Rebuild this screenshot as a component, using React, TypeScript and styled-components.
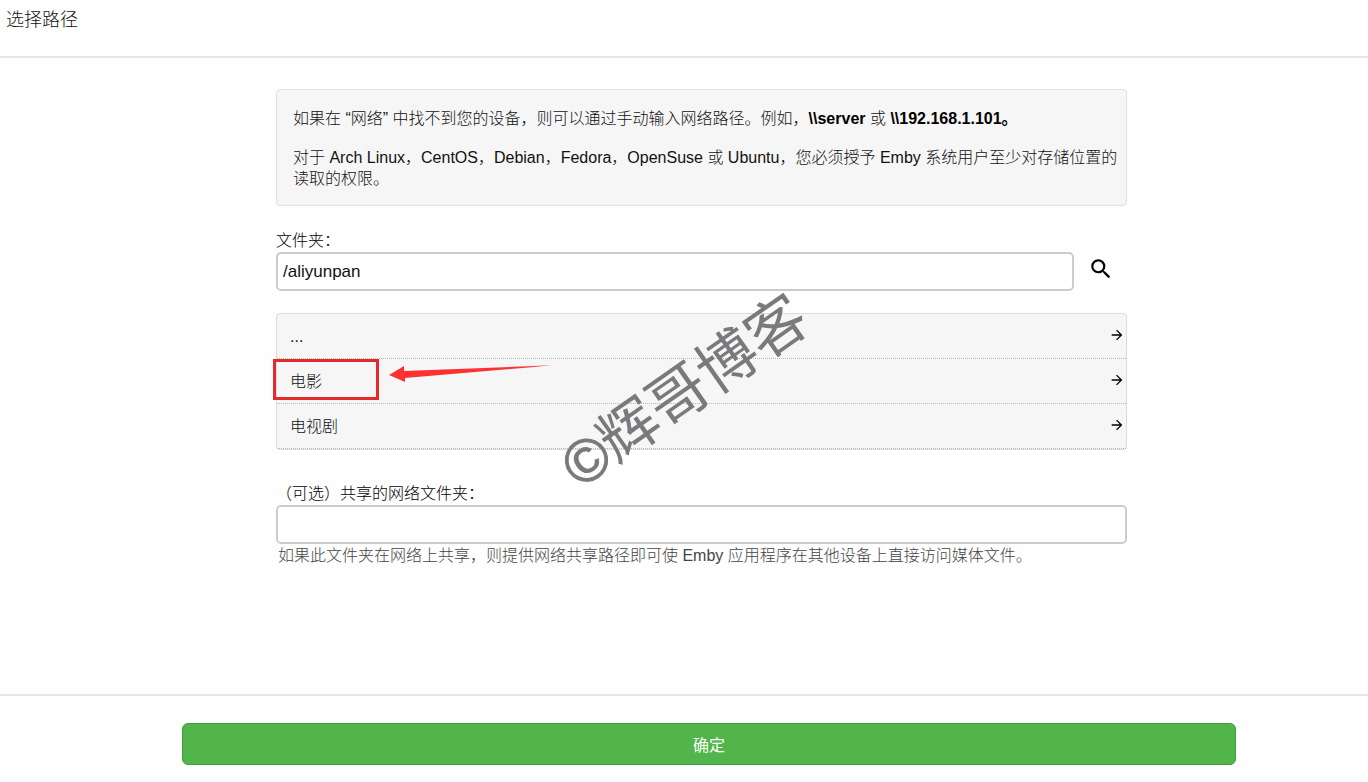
import React from "react";
import styled, { createGlobalStyle } from "styled-components";

const GlobalStyle = createGlobalStyle`
  *, *::before, *::after { box-sizing: border-box; }
  body {
    margin: 0;
    background: #fefefe;
    color: #111;
    font-family: "Liberation Sans", "Noto Sans CJK SC", sans-serif;
    font-size: 16px;
    font-weight: 300;
    line-height: 21px;
  }
  button, input { font: inherit; color: inherit; }
`;

const Page = styled.div`
  display: flex;
  flex-direction: column;
  min-height: 100vh;
`;

const Header = styled.header`
  height: 58px;
  padding: 8px 6px;
  border-bottom: 2px solid #e6e6e6;
`;

const Title = styled.h1`
  margin: 0;
  font-size: 18px;
  font-weight: 300;
  line-height: 24px;
`;

const Main = styled.main`
  position: relative;
  flex: 1;
  margin: 0 241px 0 276px;
  padding: 31px 0 24px;
`;

const Notice = styled.section`
  padding: 18px 6px 16px 16px;
  border: 1px solid #e0e0e0;
  border-radius: 4px;
  background: #f6f6f6;
`;

const Paragraph = styled.p`
  margin: 0;
  & + & { margin-top: 18px; }
`;

const Strong = styled.strong`
  color: #000;
  font-weight: 700;
`;

const Field = styled.div<{ $top: number }>`
  margin-top: ${(p) => p.$top}px;
`;

const Label = styled.label`
  display: block;
  margin-bottom: 1px;
  color: #000;
`;

const InputRow = styled.div`
  display: flex;
  gap: 10px;
`;

const TextInput = styled.input`
  flex: 1;
  min-width: 0;
  height: 39px;
  padding: 0 5px;
  border: 2px solid #cccccc;
  border-radius: 5px;
  background: #fff;
  font-size: 17px;
  outline: none;
`;

const SearchButton = styled.button`
  display: grid;
  place-items: center;
  width: 43px;
  height: 34px;
  padding: 0 10px 0 0;
  border: 0;
  background: none;
  color: #000;
`;

const Listing = styled.ul`
  margin: 22px 0 0;
  padding: 0;
  list-style: none;
  border: 1px solid #dcdcdc;
  border-radius: 4px;
  background: #f6f6f7;
`;

const Item = styled.li`
  position: relative;
  border-bottom: 1px dotted #b8b8b8;
`;

const ItemButton = styled.button`
  display: flex;
  align-items: center;
  justify-content: space-between;
  width: 100%;
  height: 44px;
  padding: 0 1px 0 13px;
  border: 0;
  background: none;
  text-align: left;

  svg { margin-bottom: 2px; }
`;

const Highlight = styled.span`
  position: absolute;
  top: 0;
  left: -4px;
  width: 106px;
  height: 41px;
  border: 3px solid #e52a2a;
  pointer-events: none;
`;

const Pointer = styled.svg`
  position: absolute;
  top: 3px;
  left: 111px;
  pointer-events: none;
`;

const Help = styled.p`
  margin: 1px 0 0 2px;
  color: #444;
`;

const Watermark = styled.div`
  position: absolute;
  top: 299px;
  left: 267px;
  width: 284px;
  color: #7b797b;
  font-size: 60px;
  font-weight: 400;
  line-height: 70px;
  white-space: nowrap;
  transform: rotate(-35deg);
  pointer-events: none;
`;

const CopyrightMark = styled.span`
  -webkit-text-stroke: 1px currentColor;
`;

const Footer = styled.footer`
  padding: 27px 132px 17px 182px;
  border-top: 2px solid #e6e4e6;
`;

const ConfirmButton = styled.button`
  display: block;
  width: 100%;
  height: 42px;
  padding-top: 3px;
  border: 1px solid #3f9d3b;
  border-radius: 6px;
  background: #52b54b;
  color: #fff;
  font-weight: 400;
`;

const SearchIcon = () => (
  <svg width="26" height="26" viewBox="0 0 24 24" fill="currentColor" aria-hidden="true">
    <path d="M15.5 14h-.79l-.28-.27A6.47 6.47 0 0 0 16 9.5 6.5 6.5 0 1 0 9.5 16c1.61 0 3.09-.59 4.23-1.57l.27.28v.79l5 4.99L20.49 19l-4.99-5zm-6 0C7.01 14 5 11.99 5 9.5S7.01 5 9.5 5 14 7.01 14 9.5 11.99 14 9.5 14z" />
  </svg>
);

const ArrowIcon = () => (
  <svg width="16" height="16" viewBox="0 0 24 24" fill="#000" aria-hidden="true">
    <path d="M12 4l-1.41 1.41L16.17 11H4v2h12.17l-5.58 5.59L12 20l8-8z" />
  </svg>
);

const folders = [
  { name: "...", marked: false },
  { name: "电影", marked: true },
  { name: "电视剧", marked: false },
];

export default function App() {
  return (
    <>
      <GlobalStyle />
      <Page>
        <Header>
          <Title>选择路径</Title>
        </Header>
        <Main>
          <Notice>
            <Paragraph>
              如果在 “网络” 中找不到您的设备，则可以通过手动输入网络路径。例如，<Strong>\\server</Strong> 或{" "}
              <Strong>\\192.168.1.101。</Strong>
            </Paragraph>
            <Paragraph>
              对于 Arch Linux，CentOS，Debian，Fedora，OpenSuse 或 Ubuntu，您必须授予 Emby
              系统用户至少对存储位置的读取的权限。
            </Paragraph>
          </Notice>
          <Field $top={24}>
            <Label htmlFor="folder">文件夹：</Label>
            <InputRow>
              <TextInput id="folder" type="text" defaultValue="/aliyunpan" />
              <SearchButton type="button" aria-label="搜索">
                <SearchIcon />
              </SearchButton>
            </InputRow>
          </Field>
          <Listing>
            {folders.map((folder) => (
              <Item key={folder.name}>
                <ItemButton type="button">
                  {folder.name}
                  <ArrowIcon />
                </ItemButton>
                {folder.marked && (
                  <>
                    <Highlight />
                    <Pointer width="165" height="24" viewBox="0 0 165 24" aria-hidden="true">
                      <path d="M1 13L16 4V9L146 4L164 3L146 5L17 16V20Z" fill="#fb3232" />
                    </Pointer>
                  </>
                )}
              </Item>
            ))}
          </Listing>
          <Field $top={33}>
            <Label htmlFor="shared">（可选）共享的网络文件夹：</Label>
            <InputRow>
              <TextInput id="shared" type="text" aria-describedby="shared-help" />
            </InputRow>
            <Help id="shared-help">
              如果此文件夹在网络上共享，则提供网络共享路径即可使 Emby 应用程序在其他设备上直接访问媒体文件。
            </Help>
          </Field>
          <Watermark>
            <CopyrightMark>©</CopyrightMark>辉哥博客
          </Watermark>
        </Main>
        <Footer>
          <ConfirmButton type="button">确定</ConfirmButton>
        </Footer>
      </Page>
    </>
  );
}
